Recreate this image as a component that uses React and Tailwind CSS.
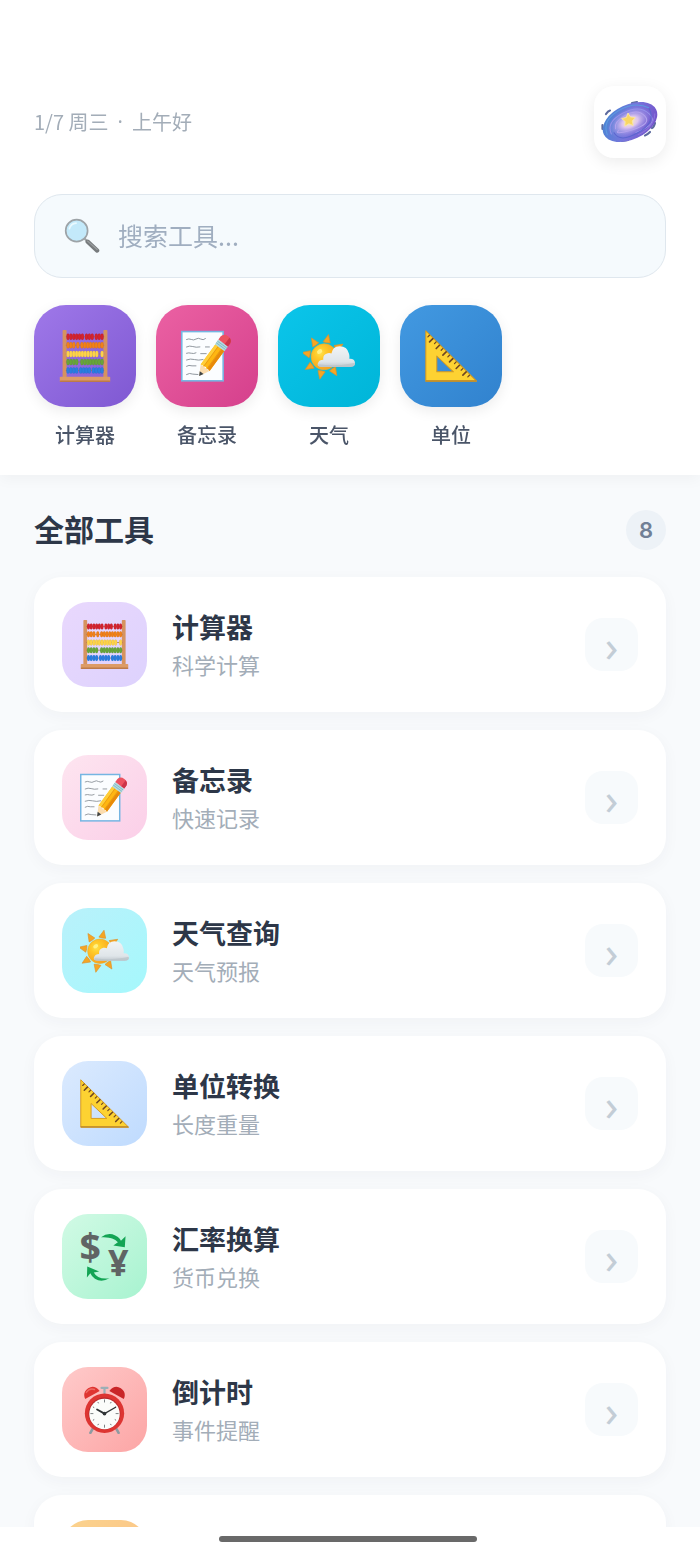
import React from "react";

const BEADS = [
  { y: 17, color: "#d3232f", gap: [6, 9] },
  { y: 38, color: "#f08019", gap: [3, 4] },
  { y: 60, color: "#fdd34a", gap: [11, 11] },
  { y: 80, color: "#67a53a", gap: [4, 4] },
  { y: 101, color: "#2a7de0", gap: [4, 8] },
];

function Abacus({ className }) {
  return (
    <svg viewBox="0 0 128 130" className={className} aria-hidden="true">
      <rect x="8" y="0" width="10" height="120" rx="2" fill="#d6935f" />
      <rect x="110" y="0" width="10" height="120" rx="2" fill="#d6935f" />
      {BEADS.map((row) => (
        <g key={row.y}>
          <rect x="16" y={row.y - 1} width="96" height="2" fill="#a9794f" />
          {Array.from({ length: 12 }, (_, i) => i).map((i) => {
            const shift = (i >= row.gap[0] ? 3 : 0) + (i >= row.gap[1] ? 3 : 0);
            return (
              <ellipse key={i} cx={21.5 + i * 7.2 + shift} cy={row.y} rx="4" ry="8" fill={row.color} stroke="#00000022" strokeWidth="0.8" />
            );
          })}
        </g>
      ))}
      <rect x="1" y="117" width="126" height="13" rx="2" fill="#dd9b66" />
      <rect x="1" y="126" width="126" height="4" rx="2" fill="#bd7a49" />
    </svg>
  );
}

function Memo({ className }) {
  return (
    <svg viewBox="0 0 132 132" className={className} aria-hidden="true">
      <rect x="2" y="4" width="105" height="125" fill="#fbfdff" stroke="#75b5e2" strokeWidth="4" />
      <g fill="none" stroke="#8b9299" strokeWidth="2.4" strokeLinecap="round">
        <path d="M14 24q6-3 12 0t12-1 12 0 12-1" />
        <path d="M14 43q8-4 16-1t18 1M62 43h10" />
        <path d="M14 59q6-2 12 0t12-1M50 60h14" />
        <path d="M14 76q10-4 20-1t22 0" />
        <path d="M14 92q6-4 14-1l10 0" />
        <path d="M14 113q8-5 16-1l13 1" />
      </g>
      <g transform="translate(46 117) rotate(-54)">
        <path d="M0 0 26-14V14Z" fill="#fbdcae" />
        <path d="M0 0 11-6V6Z" fill="#3f4447" />
        <path d="M26-14q5 4 0 9 5 5 0 10 5 5 0 9H90V-14Z" fill="#ffb611" />
        <path d="M26-14H90V-6H28Z" fill="#ffce38" />
        <path d="M28 6H90V14H26Z" fill="#e88a0a" />
        <path d="M28-5H90M28 5H90" stroke="#db8d16" strokeWidth="1.5" />
        <rect x="89" y="-15" width="15" height="30" fill="#b2dce2" />
        <path d="M94-15V15M99-15V15" stroke="#78aeb8" strokeWidth="1.8" />
        <path d="M104-15h10q11 2 11 15t-11 15h-10Z" fill="#ec5260" />
        <path d="M104 5h20q-2 9-10 10h-10Z" fill="#cc3449" />
      </g>
    </svg>
  );
}

function Weather({ className, id }) {
  return (
    <svg viewBox="0 0 128 128" className={className} aria-hidden="true">
      <defs>
        <radialGradient id={id + "-sun"} cx="35%" cy="35%" r="75%">
          <stop offset="0" stopColor="#ffe24c" />
          <stop offset="0.3" stopColor="#ffc929" />
          <stop offset="1" stopColor="#f79a1c" />
        </radialGradient>
        <linearGradient id={id + "-cloud"} x1="0" y1="0" x2="0" y2="1">
          <stop offset="0" stopColor="#f1f4f6" />
          <stop offset="0.75" stopColor="#dfe5e9" />
          <stop offset="1" stopColor="#bfc6cc" />
        </linearGradient>
      </defs>
      <g fill="#f5a623" stroke="#dc8f2b" strokeWidth="1.5" strokeLinejoin="round">
        {[10, 55, 100, 145, 190, 235, 280, 325].map((angle) => (
          <path key={angle} transform={"translate(52 66) rotate(" + angle + ")"} d="M-9-36Q0-34 9-36L1-56Z" />
        ))}
      </g>
      <circle cx="52" cy="66" r="32" fill={"url(#" + id + "-sun)"} stroke="#f0af29" strokeWidth="1.5" />
      <ellipse cx="41" cy="53" rx="7" ry="5" fill="#fff184" transform="rotate(-35 41 53)" />
      <path d="M45 91Q33 90 37 81q3-8 13-8-2-13 11-16 6-1 9 1 3-18 20-18 19 0 23 18 2 5 1 13 13-1 14 10 1 9-12 10Z" fill={"url(#" + id + "-cloud)"} />
      <path d="M38 84q38 6 77-1 11-3 13-1 0 8-12 9H45q-7-1-7-7Z" fill="#b9c3c9" opacity="0.7" />
    </svg>
  );
}

function SetSquare({ className }) {
  return (
    <svg viewBox="0 0 128 128" className={className} aria-hidden="true">
      <path fillRule="evenodd" d="M2 2V126H127ZM29 64 70 103H29Z" fill="#fdd232" stroke="#d79a1e" strokeWidth="2.5" strokeLinejoin="round" />
      <path d="M2 125H126" stroke="#b9852b" strokeWidth="3" />
      <g stroke="#6f4621" strokeLinecap="round">
        {Array.from({ length: 13 }, (_, i) => i).map((i) => (
          <path
            key={i}
            transform={"translate(" + (11 + i * 8.2) + " " + (13 + i * 8.2) + ")"}
            d={i % 2 ? "M0 0-8 8" : "M0 0-4 4"}
            strokeWidth={i % 2 ? 4 : 3}
          />
        ))}
      </g>
    </svg>
  );
}

function Exchange({ className }) {
  return (
    <svg viewBox="0 0 128 128" overflow="visible" className={className + " overflow-visible"} aria-hidden="true">
      <g fill="#606464" fontFamily="'Noto Sans', 'Liberation Sans', sans-serif" fontWeight="700" textAnchor="middle">
        <text x="27" y="77" fontSize="98">$</text>
        <text x="100" y="115" fontSize="94">¥</text>
      </g>
      <path d="M55 14Q73 0 92 9q11 5 15 14l12-12-2 29-30-5 12-8Q86 12 55 14Z" fill="#13a454" />
      <path d="M77 121Q56 133 39 122q-9-6-12-14l-9 11 1-29 31 13-14 3q10 19 41 15Z" fill="#13a454" />
    </svg>
  );
}

function AlarmClock({ className }) {
  return (
    <svg viewBox="0 0 128 132" className={className} aria-hidden="true">
      <path d="M35 113 26 129M93 113l9 16" stroke="#8e9ba2" strokeWidth="7" strokeLinecap="round" />
      <path d="M64 22V8M56 8h16" stroke="#9cafb6" strokeWidth="6" strokeLinecap="round" />
      <path d="M12 38Q4 20 20 9T51 16Z" fill="#df3431" />
      <path d="M116 38q8-18-8-29T77 16Z" fill="#c92628" />
      <path d="M15 20Q24 7 37 12" fill="none" stroke="#ee6b65" strokeWidth="4" strokeLinecap="round" />
      <circle cx="64" cy="76" r="53" fill="#dd3532" />
      <circle cx="64" cy="77" r="43" fill="#b9282b" />
      <circle cx="64" cy="78" r="41" fill="#fbfcfa" />
      <g stroke="#6c7376" strokeWidth="2.4" strokeLinecap="round">
        {Array.from({ length: 12 }, (_, i) => i).map((i) => (
          <path key={i} transform={"translate(64 77) rotate(" + i * 30 + ")"} d={i % 3 ? "M0-35V-33" : "M0-37V-31"} />
        ))}
      </g>
      <path d="M64 77 44 66" stroke="#303436" strokeWidth="5" strokeLinecap="round" />
      <path d="M64 77 94 60" stroke="#303436" strokeWidth="3.4" strokeLinecap="round" />
      <circle cx="64" cy="77" r="5" fill="#303436" />
    </svg>
  );
}

function Magnifier({ className }) {
  return (
    <svg viewBox="0 0 128 128" className={className} aria-hidden="true">
      <path d="M72 72 86 86" stroke="#a0a4a6" strokeWidth="8" />
      <path d="M84 84 118 116" stroke="#777b7d" strokeWidth="15" strokeLinecap="round" />
      <path d="M84 82 118 112" stroke="#9b9fa1" strokeWidth="4" strokeLinecap="round" />
      <circle cx="45" cy="45" r="39" fill="#c3e9fa" stroke="#9da3a7" strokeWidth="6" />
      <path d="M19 38Q24 20 43 18" fill="none" stroke="#e9f9ff" strokeWidth="6" strokeLinecap="round" />
    </svg>
  );
}

function Galaxy({ className }) {
  return (
    <svg viewBox="0 0 60 44" className={className} aria-hidden="true">
      <defs>
        <linearGradient id="galaxy-disc" x1="0" y1="0.2" x2="1" y2="0.8">
          <stop offset="0" stopColor="#4686d3" />
          <stop offset="0.5" stopColor="#7775dc" />
          <stop offset="1" stopColor="#7350c8" />
        </linearGradient>
        <radialGradient id="galaxy-core">
          <stop offset="0" stopColor="#fdeebb" />
          <stop offset="0.35" stopColor="#dcc4f0" />
          <stop offset="1" stopColor="#8f86e4" stopOpacity="0" />
        </radialGradient>
      </defs>
      <g fill="none" stroke="#5c6a9e" strokeWidth="2.2" strokeLinecap="round">
        <path d="M6 14q2-3 4-3.500M50 32q-3 3-5 3.500M55 23q-1 4-3 5M2.500 29v-4M22 41l6-1M32 3l5-1" />
      </g>
      <g transform="rotate(-25 30 22)">
        <ellipse cx="30" cy="22" rx="29" ry="17.500" fill="url(#galaxy-disc)" />
        <ellipse cx="30" cy="22" rx="24" ry="14" fill="url(#galaxy-core)" />
        <g fill="none" strokeLinecap="round">
          <path d="M4 24Q5 9 24 7t29 10" stroke="#5d9be0" strokeWidth="1" />
          <path d="M8 25Q8 12 27 11t24 12-20 11" stroke="#9792ea" strokeWidth="1" />
          <path d="M53 18Q54 33 33 35T11 25" stroke="#5b66cf" strokeWidth="1" />
          <path d="M14 22Q15 15 29 14t17 9-17 7-13-5" stroke="#b3a3ee" strokeWidth="1" />
          <path d="M56 25Q50 37 32 37" stroke="#8b74dc" strokeWidth="1" />
        </g>
      </g>
      <path d="M28 13 30.400 17 35.200 17.500 32.200 21 33.200 25.500 28.800 23.700 24.800 26.200 25.200 21.500 21.600 18.500 26.300 17.500Z" fill="#f8d664" stroke="#fbe9a5" strokeWidth="0.8" />
    </svg>
  );
}

const SHORTCUTS = [
  { name: "计算器", Icon: Abacus, tile: "from-[#9f78e9] to-[#7f58d2]" },
  { name: "备忘录", Icon: Memo, tile: "from-[#eb61a3] to-[#d53f8c]" },
  { name: "天气", Icon: Weather, tile: "from-[#0bc5ea] to-[#00b5d8]" },
  { name: "单位", Icon: SetSquare, tile: "from-[#4299e1] to-[#3182ce]" },
];

const TOOLS = [
  { name: "计算器", note: "科学计算", Icon: Abacus, tile: "from-[#e9d8fd] to-[#ddd2fd]" },
  { name: "备忘录", note: "快速记录", Icon: Memo, tile: "from-[#fde5f0] to-[#fbcfe8]" },
  { name: "天气查询", note: "天气预报", Icon: Weather, tile: "from-[#b9f1fb] to-[#a5f8fc]" },
  { name: "单位转换", note: "长度重量", Icon: SetSquare, tile: "from-[#dbeafe] to-[#bfdbfe]" },
  { name: "汇率换算", note: "货币兑换", Icon: Exchange, tile: "from-[#d1fae5] to-[#a7f3d0]" },
  { name: "倒计时", note: "事件提醒", Icon: AlarmClock, tile: "from-[#fecaca] to-[#fca5a5]" },
];

const CARD = "flex w-full items-center gap-[25px] rounded-[28px] bg-white px-7 py-[25px] text-left shadow-[0_4px_16px_rgba(45,55,72,0.04)]";
const TILE = "flex size-[85px] shrink-0 items-center justify-center rounded-[26px] bg-linear-135";

function ToolCard({ name, note, Icon, tile, id }) {
  return (
    <li>
      <button type="button" className={CARD}>
        <span className={TILE + " " + tile}>
          <Icon id={id} className="size-[49px]" />
        </span>
        <span className="flex min-w-0 flex-1 flex-col">
          <span className="text-[27px] leading-[38px] font-bold text-[#2d3748]">{name}</span>
          <span className="text-[22px] leading-9 text-[#a3adb8]">{note}</span>
        </span>
        <span aria-hidden="true" className="flex size-[53px] shrink-0 items-center justify-center rounded-[18px] bg-[#f7fafc] font-['Noto_Sans'] text-[44px] leading-none text-[#c3cdd6]">
          ›
        </span>
      </button>
    </li>
  );
}

export default function App() {
  return (
    <div className="flex h-screen flex-col bg-white font-['Noto_Sans_CJK_SC','Noto_Sans',sans-serif]" lang="zh-CN">
      <header className="relative z-10 shrink-0 bg-white px-[34px] pt-[86px] pb-6 shadow-[0_4px_14px_rgba(0,0,0,0.04)]">
        <div className="flex items-center justify-between">
          <p className="flex gap-[9px] text-xl text-[#a3adb8]">
            <span>1/7 周三</span>
            <span className="font-['Noto_Sans']">·</span>
            <span>上午好</span>
          </p>
          <button type="button" aria-label="个人中心" className="flex size-[72px] items-center justify-center rounded-[20px] bg-white shadow-[0_4px_16px_rgba(0,0,0,0.08)]">
            <Galaxy className="h-11 w-[60px]" />
          </button>
        </div>

        <label className="mt-9 flex h-[84px] items-center gap-[18px] rounded-[28px] border border-[#dfe7ee] bg-[#f5fafd] px-[29px]">
          <Magnifier className="size-9 shrink-0" />
          <input
            type="text"
            aria-label="搜索工具"
            placeholder="搜索工具..."
            className="min-w-0 flex-1 bg-transparent text-[25px] text-[#2d3748] outline-none placeholder:text-[#a0aec0]"
          />
        </label>

        <nav className="mt-[27px] flex gap-5">
          {SHORTCUTS.map(({ name, Icon, tile }, i) => (
            <button type="button" key={name} className="flex w-[102px] flex-col items-center gap-3">
              <span className={"flex size-[102px] items-center justify-center rounded-[32px] bg-linear-135 shadow-[0_4px_14px_rgba(0,0,0,0.08)] " + tile}>
                <Icon id={"quick" + i} className="size-[52px]" />
              </span>
              <span className="text-xl leading-8 font-medium text-[#4a5568]">{name}</span>
            </button>
          ))}
        </nav>
      </header>

      <main className="min-h-0 flex-1 overflow-y-auto bg-[#f8fafc] px-[34px] pt-[35px] pb-8 [scrollbar-width:none]">
        <div className="flex h-10 items-start justify-between">
          <h1 className="text-3xl leading-9 font-bold text-[#2d3748]">全部工具</h1>
          <span className="flex size-10 items-center justify-center rounded-full bg-[#edf2f7] font-['Inter'] text-[22px] font-semibold text-[#718096]">8</span>
        </div>
        <ul className="mt-[27px] flex flex-col gap-[18px]">
          {TOOLS.map((tool, i) => (
            <ToolCard key={tool.name} {...tool} id={"tool" + i} />
          ))}
          <li className={CARD} aria-hidden="true">
            <span className={TILE + " from-[#fbd38d] to-[#fbbf85]"} />
          </li>
        </ul>
      </main>

      <footer className="flex h-7 shrink-0 items-start justify-center bg-white pt-[9px] pr-1">
        <div className="h-[6px] w-[37%] rounded-full bg-[#696969]" />
      </footer>
    </div>
  );
}
